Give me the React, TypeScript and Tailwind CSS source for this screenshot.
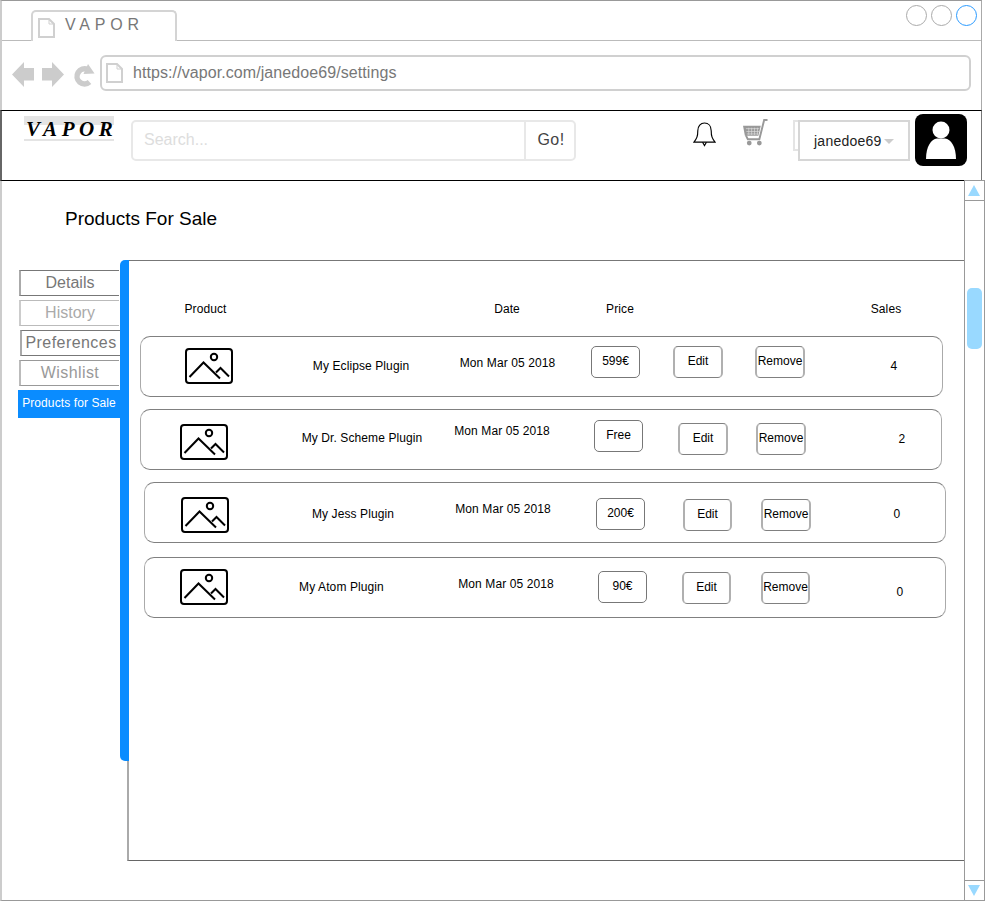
import React from 'react';

const products = [
  {
    name: 'My Eclipse Plugin', price: '599€', sales: '4',
    row: 'mt-[19px] ml-[11px] w-[803px]',
    icon: 'ml-[44px] mt-[11px]',
    nameCls: 'ml-[80px] mt-[21px] w-[96px]',
    dateCls: 'ml-[52px] mt-[18px] w-[93px]',
    priceCls: 'ml-[37px] mt-[9px] w-[49px]',
    editCls: 'ml-[33px] mt-[9px] w-[50px]',
    removeCls: 'ml-[32px] mt-[9px] w-[50px]',
    salesCls: 'ml-[79px] mt-[21px] w-[20px]',
  },
  {
    name: 'My Dr. Scheme Plugin', price: 'Free', sales: '2',
    row: 'mt-[12px] ml-[11px] w-[802px]',
    icon: 'ml-[39px] mt-[14px]',
    nameCls: 'ml-[74px] mt-[20px] w-[120px]',
    dateCls: 'ml-[33px] mt-[13px] w-[94px]',
    priceCls: 'ml-[45px] mt-[10px] w-[49px]',
    editCls: 'ml-[35px] mt-[13px] w-[50px]',
    removeCls: 'ml-[28px] mt-[13px] w-[50px]',
    salesCls: 'ml-[86px] mt-[21px] w-[20px]',
  },
  {
    name: 'My Jess Plugin', price: '200€', sales: '0',
    row: 'mt-[12px] ml-[15px] w-[802px]',
    icon: 'ml-[36px] mt-[14px]',
    nameCls: 'ml-[83px] mt-[23px] w-[82px]',
    dateCls: 'ml-[62px] mt-[18px] w-[94px]',
    priceCls: 'ml-[46px] mt-[15px] w-[49px]',
    editCls: 'ml-[38px] mt-[16px] w-[49px]',
    removeCls: 'ml-[29px] mt-[16px] w-[50px]',
    salesCls: 'ml-[76px] mt-[23px] w-[20px]',
  },
  {
    name: 'My Atom Plugin', price: '90€', sales: '0',
    row: 'mt-[14px] ml-[15px] w-[802px]',
    icon: 'ml-[35px] mt-[11px]',
    nameCls: 'ml-[72px] mt-[21px] w-[83px]',
    dateCls: 'ml-[76px] mt-[18px] w-[94px]',
    priceCls: 'ml-[45px] mt-[13px] w-[49px]',
    editCls: 'ml-[35px] mt-[14px] w-[49px]',
    removeCls: 'ml-[30px] mt-[14px] w-[49px]',
    salesCls: 'ml-[80px] mt-[26px] w-[20px]',
  },
];

const PageIcon = ({ className }: { className: string }) => (
  <svg viewBox="0 0 17 20" className={className} fill="none" stroke="#d0d0d0" strokeWidth="2">
    <path d="M1 1 H11 L16 6 V19 H1 Z" />
    <path d="M11 1 V6 H16" strokeWidth="1" />
  </svg>
);

const PictureIcon = ({ className }: { className: string }) => (
  <svg viewBox="0 0 48 36" className={className} fill="none" stroke="#000" strokeWidth="2">
    <rect x="1" y="1" width="46" height="34" rx="3" />
    <circle cx="29" cy="9" r="3.2" />
    <path d="M4.5 29 L18.5 14.5 L35 30.5" />
    <path d="M31 24.5 L35.5 20 L44 28.5" />
  </svg>
);

const Cell = ({ className, children }: { className: string; children: React.ReactNode }) => (
  <div className={`h-4 shrink-0 flex justify-center text-xs leading-4 tracking-[0.1px] whitespace-nowrap text-black ${className}`}>{children}</div>
);

const SmallButton = ({ className, children }: { className: string; children: React.ReactNode }) => (
  <div className={`h-8 shrink-0 rounded-[5px] flex items-center justify-center pb-0.5 text-xs whitespace-nowrap text-black ${className}`}>
    {children}
  </div>
);

export default function App() {
  return (
    <div className="w-[985px] h-[901px] bg-white overflow-hidden font-['Liberation_Sans',Arial,sans-serif]">
      {/* Browser chrome */}
      <div className="w-[982px] h-[110px] border-t border-t-[#999] border-r border-r-[#aaa] border-l-2 border-l-[#ccc]">
        <div className="h-[40px] border-b border-[#bbb] flex justify-between items-start">
          <div className="ml-[29px] mt-[9px] w-[146px] h-[31px] bg-white border-2 border-b-0 border-[#d4d4d4] rounded-t-[5px] flex items-start">
            <PageIcon className="ml-[5px] mt-[6px] w-[17px] h-[20px]" />
            <span className="ml-[10px] mt-[1px] text-base tracking-[4.8px] text-[#777]">VAPOR</span>
          </div>
          <div className="mt-[4px] mr-[4px] flex gap-1">
            <div className="w-[21px] h-[21px] rounded-full border border-[#aaa]" />
            <div className="w-[21px] h-[21px] rounded-full border border-[#aaa]" />
            <div className="w-[21px] h-[21px] rounded-full border border-[#2b9bff]" />
          </div>
        </div>
        <div className="flex items-start">
          <svg viewBox="0 0 22 25" className="ml-[10px] mt-[21px] w-[22px] h-[25px]" fill="#ccc">
            <path d="M0 12.5 L12 0 V6 H22 V18.5 H12 V25 Z" />
          </svg>
          <svg viewBox="0 0 22 25" className="ml-[8px] mt-[21px] w-[22px] h-[25px]" fill="#ccc">
            <path d="M22 12.5 L10 0 V6 H0 V18.5 H10 V25 Z" />
          </svg>
          <svg viewBox="0 0 22 24" className="ml-[9px] mt-[22px] w-[22px] h-[24px]" fill="none">
            <path d="M16.5 19 A7.5 7.5 0 1 1 14.5 6.5" stroke="#ccc" strokeWidth="5.5" />
            <path d="M15 1 L21.5 10.5 L10.5 11 Z" fill="#ccc" />
          </svg>
          <div className="ml-[5px] mt-[14px] w-[871px] h-[36px] rounded-[6px] border-2 border-[#d0d0d0] flex items-center">
            <PageIcon className="ml-[4px] w-[17px] h-[20px]" />
            <span className="ml-[10px] text-base tracking-[0.08px] text-[#777]">https://vapor.com/janedoe69/settings</span>
          </div>
        </div>
      </div>

      {/* Site header */}
      <div className="w-[982px] h-[71px] border-y border-black border-r border-r-[#777] border-l-2 border-l-[#666] flex items-start">
        <div className="ml-[22px] mt-[5px] w-[90px] h-[25px] bg-[#e4e4e4] pt-[9px]">
          <div className="h-[14px] bg-white flex items-center pb-[6px]">
            <span className="ml-[2px] font-['Liberation_Serif',serif] italic font-bold text-[21px] leading-none tracking-[4.6px] whitespace-nowrap text-black">VAPOR</span>
          </div>
        </div>
        <div className="ml-[17px] mt-[9px] w-[445px] h-[41px] rounded-[5px] border-2 border-[#e8e8e8] flex">
          <div className="flex-1 pl-[11px] pb-[2px] flex items-center text-base text-[#ddd]">Search...</div>
          <div className="w-[50px] pl-[2px] pb-[2px] border-l-2 border-[#e8e8e8] flex items-center justify-center text-base tracking-[0.4px] text-[#444]">Go!</div>
        </div>
        <svg viewBox="0 0 24 26" className="ml-[117px] mt-[11px] w-[23px] h-[25px]" fill="none" stroke="#000" strokeWidth="1.2">
          <path d="M1 21 C4 17 5 15 5 9 C5 4 8 1 12 1 C16 1 19 4 19 9 C19 15 20 17 23 21 Z" />
          <path d="M10 21 L12 24.5 L14 21" />
        </svg>
        <svg viewBox="0 0 26 28" className="ml-[27px] mt-[8px] w-[25px] h-[27px]" fill="#999">
          <path d="M0 7 H18.5 L16 17.5 H2 Z" />
          <path d="M25.5 1 H22 L17 21 H5 L3 17" fill="none" stroke="#999" strokeWidth="2" />
          <path d="M3 10 H17 M3.5 13 H16.5 M4 15.5 H16 M6 9 V16.5 M9 9 V16.5 M12 9 V16.5 M15 9 V16.5" stroke="#ddd" strokeWidth="0.7" />
          <circle cx="6.5" cy="25" r="2.5" />
          <circle cx="17" cy="25" r="2.5" />
        </svg>
        <div className="relative ml-[25px] mt-[9px] w-[117px] h-[41px]">
          <div className="absolute left-0 top-0 w-[8px] h-[31px] border-2 border-r-0 border-[#e4e4e4]" />
          <div className="absolute left-[5px] top-0 w-[112px] h-[41px] bg-white border-2 border-[#d6d6d6] flex items-center">
            <span className="ml-[14px] text-sm tracking-[0.25px] text-[#222]">janedoe69</span>
            <div className="ml-[2px] mt-[1px] w-0 h-0 border-x-[5px] border-x-transparent border-t-[5px] border-t-[#ccc]" />
          </div>
        </div>
        <div className="ml-[5px] mt-[3px] w-[52px] h-[52px] rounded-[8px] bg-black overflow-hidden">
          <svg viewBox="0 0 52 52" className="w-[52px] h-[52px]" fill="#fff">
            <circle cx="26" cy="16" r="8.5" />
            <path d="M11 45 C11 33 16 25 22 24.5 H30 C36 25 41 33 41 45 Z" />
          </svg>
        </div>
      </div>

      {/* Page body */}
      <div className="h-[720px] border-b border-[#999] border-l-2 border-l-[#ccc] flex">
        <div className="w-[962px] flex flex-col">
          <h1 className="ml-[63px] mt-[25px] h-[26px] text-[19px] leading-[26px] text-black">Products For Sale</h1>
          <div className="mt-[28px] h-[601px] flex">
            <div className="w-[125px] shrink-0 pt-[10px] flex flex-col items-start gap-1">
              <div className="ml-[17px] w-[100px] h-[26px] border-y border-y-[#777] border-l-2 border-l-[#aaa] flex items-center justify-center text-base text-[#777]">Details</div>
              <div className="ml-[17px] w-[100px] h-[26px] border-y border-y-[#bbb] border-l-2 border-l-[#ccc] flex items-center justify-center text-base text-[#aaa]">History</div>
              <div className="ml-[18px] w-[100px] h-[26px] border-y border-y-[#777] border-l-2 border-l-[#aaa] flex items-center justify-center text-base tracking-[0.45px] text-[#777] whitespace-nowrap">Preferences</div>
              <div className="ml-[17px] w-[100px] h-[26px] border-y border-y-[#999] border-l-2 border-l-[#bbb] flex items-center justify-center text-base tracking-[0.4px] text-[#999]">Wishlist</div>
              <div className="ml-[16px] w-[102px] h-[28px] bg-[#0a8cff] pb-[2px] flex items-center justify-center text-xs whitespace-nowrap tracking-[0.1px] text-white">Products for Sale</div>
            </div>
            <div className="relative flex-1 border-t border-t-[#777] border-b border-b-[#666] border-l-2 border-l-[#aaa] pt-[40px]">
              <div className="absolute -left-[9px] -top-px w-[9px] h-[501px] bg-[#0a8cff] rounded-l-[5px]" />
              <div className="flex">
                <Cell className="ml-[55px] w-[43px]">Product</Cell>
                <Cell className="ml-[267px] w-[26px]">Date</Cell>
                <Cell className="ml-[86px] w-[28px]">Price</Cell>
                <Cell className="ml-[236px] w-[32px]">Sales</Cell>
              </div>
              {products.map((p) => (
                <div key={p.name} className={`${p.row} h-[61px] rounded-[10px] border border-t-[#808080] border-b-[#808080] border-l-[#aaa] border-r-[#aaa] flex items-start`}>
                  <PictureIcon className={`${p.icon} w-[48px] h-[36px] shrink-0`} />
                  <Cell className={p.nameCls}>{p.name}</Cell>
                  <Cell className={p.dateCls}>Mon Mar 05 2018</Cell>
                  <SmallButton className={`${p.priceCls} border border-[#777]`}>{p.price}</SmallButton>
                  <SmallButton className={`${p.editCls} border-y border-x-2 border-y-[#808080] border-x-[#b0b0b0]`}>Edit</SmallButton>
                  <SmallButton className={`${p.removeCls} border-y border-x-2 border-y-[#808080] border-x-[#b0b0b0]`}>Remove</SmallButton>
                  <Cell className={p.salesCls}>{p.sales}</Cell>
                </div>
              ))}
            </div>
          </div>
        </div>
        {/* Scrollbar */}
        <div className="-mt-px w-[21px] h-[720px] bg-white border-x border-t border-[#999] flex flex-col">
          <div className="h-[20px] shrink-0 border-b border-[#999] pr-px flex items-center justify-center">
            <div className="w-0 h-0 border-x-[6px] border-x-transparent border-b-[11px] border-b-[#99d9ff]" />
          </div>
          <div className="flex-1">
            <div className="ml-[2px] mt-[87px] w-[15px] h-[61px] rounded-[5px] bg-[#99d9ff]" />
          </div>
          <div className="h-[20px] shrink-0 border-t border-[#999] pr-px flex items-center justify-center">
            <div className="w-0 h-0 border-x-[6px] border-x-transparent border-t-[11px] border-t-[#99d9ff]" />
          </div>
        </div>
      </div>
    </div>
  );
}
